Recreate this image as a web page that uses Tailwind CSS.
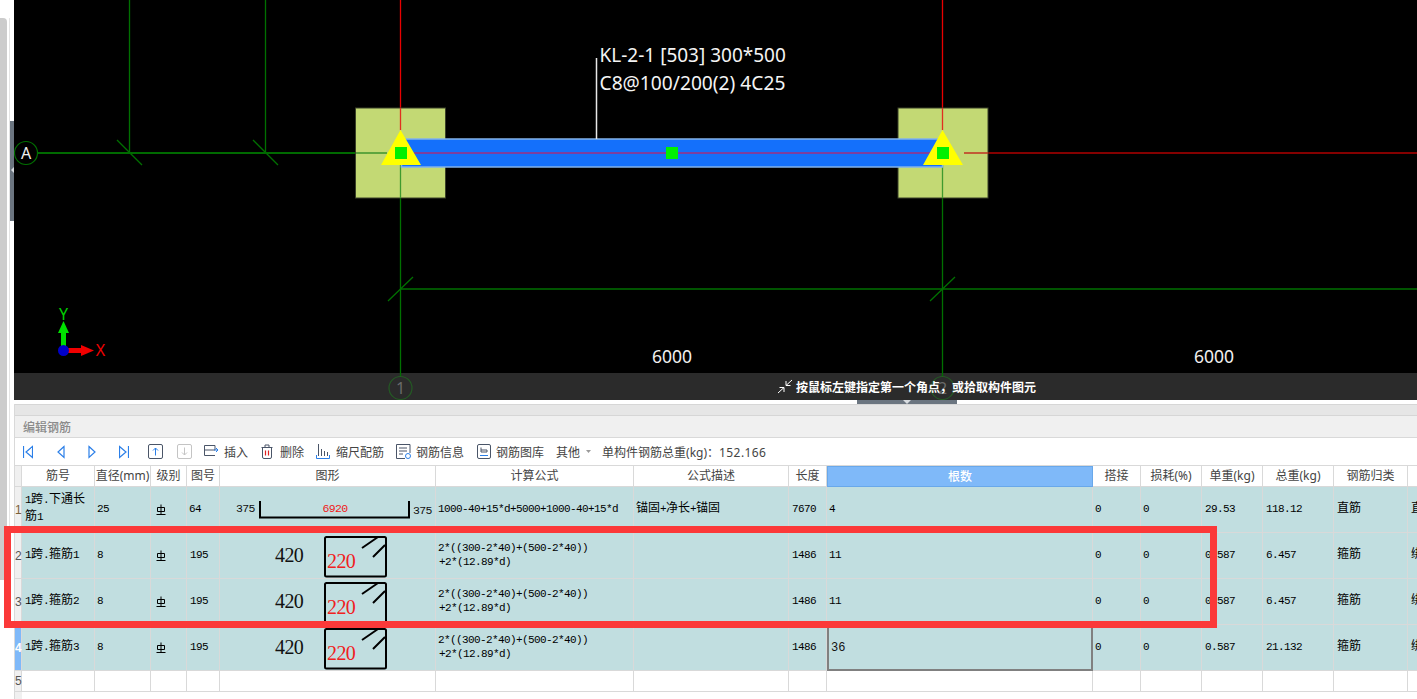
<!DOCTYPE html>
<html lang="zh">
<head>
<meta charset="utf-8">
<title>编辑钢筋</title>
<script src="https://cdn.jsdelivr.net/npm/@tailwindcss/browser@4"></script>
</head>
<body class="w-[1417px] h-[699px] overflow-hidden bg-white relative font-['Noto_Sans','Noto_Sans_CJK_SC',sans-serif]">
<div class="flex h-[699px]">
  <!-- left rail -->
  <div class="w-[14px] shrink-0 flex flex-col">
    <div class="relative h-[562px] mt-[18px] flex">
      <div class="w-[7px] h-full bg-[#cccccc] rounded-tr-[4px]"></div>
      <div class="w-[3px] h-full border-r border-[#e4e4e4]"></div>
      <div class="w-[4px] h-[100px] mt-[103px] bg-[#6b7580] flex items-center">
        <svg width="4" height="8" viewBox="0 0 4 8" class="block"><path d="M4 0v6L1 3z" fill="#d8dce0"/></svg>
      </div>
    </div>
  </div>
  <!-- right column -->
  <div class="w-[1403px] shrink-0 flex flex-col">
    <!-- drawing canvas -->
    <div class="relative h-[400px] shrink-0 flex flex-col bg-black">
      <div class="flex-1"></div>
      <div class="h-[27px] bg-[#2b2b2b] flex items-center pl-[763px] gap-[3px]">
        <svg width="16" height="15" viewBox="0 0 16 15" fill="none" stroke="#fff" stroke-width="1" class="block relative z-10"><path d="M1 14 7 8.500M2.500 8.500H7V13M15 1 9 6.500M13.500 6.500H9V2"/></svg>
        <span class="relative z-10 text-xs font-bold text-white whitespace-nowrap font-['Noto_Sans_CJK_SC',sans-serif]">按鼠标左键指定第一个角点，或拾取构件图元</span>
      </div>
      <svg class="absolute left-0 top-0 block" width="1403" height="400" viewBox="14 0 1403 400" fill="none">
        <!-- grid lines -->
        <g stroke="#007000" stroke-width="1.300">
          <path d="M129.500 0V153M265.500 0V153M400.500 165V376M942.500 165V376"/>
          <path d="M117 140 142 165M253 140 278 165M388 301 413 277M930 301 955 277"/>
          <path d="M400 289H1417"/>
        </g>
        <path d="M38 153H356" stroke="#006a00" stroke-width="1.800"/>
        <path d="M400.500 0V130M942.500 0V130" stroke="#e80000" stroke-width="1.300"/>
        <path d="M988 153H1417" stroke="#b00000" stroke-width="1.500"/>
        <!-- columns -->
        <rect x="355.500" y="108" width="90" height="90" fill="#c3d974" stroke="#3a4028"/>
        <rect x="898" y="108" width="90" height="90" fill="#c3d974" stroke="#3a4028"/>
        <path d="M356 153H387M898 153H930" stroke="#5ea53e" stroke-width="1.800"/>
        <path d="M964 153H988" stroke="#c03020" stroke-width="1.500"/>
        <path d="M400.500 165V198M942.500 165V198" stroke="#3f9a2e" stroke-width="1.300"/>
        <path d="M400.500 108V130M942.500 108V130" stroke="#e03020" stroke-width="1.300"/>
        <!-- beam -->
        <rect x="401.500" y="139" width="541" height="28" fill="#1470fb" stroke="#82b2ea" stroke-width="1.500"/>
        <path d="M414 153H930" stroke="#a02f80" stroke-width="1.500"/>
        <path d="M400.500 130 381 165H421Z M942.500 130 923 165H963Z" fill="#ffff00"/>
        <rect x="395" y="147" width="12" height="12" fill="#00f000"/>
        <rect x="666" y="147" width="12" height="12" fill="#00f000"/>
        <rect x="937" y="147" width="12" height="12" fill="#00f000"/>
        <path d="M596.500 58V139" stroke="#e8e8e8" stroke-width="1.500"/>
        <!-- beam label -->
        <text x="599.500" y="62" fill="#f4f4f4" font-size="19" class="font-['Noto_Sans',sans-serif]">KL-2-1 [503] 300*500</text>
        <text x="599.500" y="90" fill="#f4f4f4" font-size="19.200" class="font-['Noto_Sans',sans-serif]">C8@100/200(2) 4C25</text>
        <text x="652" y="363" fill="#f0f0f0" font-size="17.500" class="font-['Noto_Sans',sans-serif]">6000</text>
        <text x="1194" y="363" fill="#f0f0f0" font-size="17.500" class="font-['Noto_Sans',sans-serif]">6000</text>
        <!-- axis bubbles -->
        <circle cx="26" cy="153" r="11.500" stroke="#007000" stroke-width="1.200" fill="#000"/>
        <text x="26" y="159" fill="#f0f0f0" font-size="16" text-anchor="middle" class="font-['Noto_Sans',sans-serif]">A</text>
        <circle cx="400.500" cy="388" r="11.500" stroke="#245a24" stroke-width="1.200"/>
        <text x="400.500" y="394" fill="#6a6a6a" font-size="16" text-anchor="middle" class="font-['Noto_Sans',sans-serif]">1</text>
        <circle cx="942.500" cy="388" r="11.500" stroke="#245a24" stroke-width="1.200"/>
        <text x="942.500" y="394" fill="#6a6a6a" font-size="16" text-anchor="middle" class="font-['Noto_Sans',sans-serif]">2</text>
        <!-- coordinate axes -->
        <rect x="61" y="331" width="5" height="19" fill="#00e000"/>
        <path d="M63.500 321 69 333H58Z" fill="#00e000"/>
        <rect x="64" y="348" width="20" height="5" fill="#f00000"/>
        <path d="M94 350.500 81 345V356Z" fill="#f00000"/>
        <circle cx="63.500" cy="350.500" r="5.500" fill="#0000c8"/>
        <text x="63.500" y="320" fill="#00d000" font-size="16" text-anchor="middle" class="font-['Noto_Sans',sans-serif]">Y</text>
        <text x="100.500" y="356" fill="#f00000" font-size="16" text-anchor="middle" class="font-['Noto_Sans',sans-serif]">X</text>
      </svg>
    </div>
    <!-- splitter -->
    <div class="h-[4px] shrink-0 bg-white">
      <div class="ml-[843px] w-[100px] h-[4px] bg-[#6b7580] flex justify-center">
        <svg width="8" height="4" viewBox="0 0 8 4" class="block"><path d="M0 0h8L4 4z" fill="#d8dce0"/></svg>
      </div>
    </div>
    <!-- bottom panel -->
    <div class="flex-1 flex flex-col border-l border-[#d9d9d9] overflow-hidden">
      <div class="h-[12px] shrink-0 bg-[#e6e6e6] border-y border-[#d6d6d6]"></div>
      <div class="h-[22px] shrink-0 bg-[#f0f0f0] border-b border-[#d9d9d9] flex items-center pl-[8px]">
        <span class="text-xs font-medium text-[#8a8a8a] font-['Noto_Sans_CJK_SC',sans-serif]">编辑钢筋</span>
      </div>
      <!-- toolbar -->
      <div class="h-[27px] shrink-0 flex items-center text-xs text-[#444] whitespace-nowrap font-['Noto_Sans','Noto_Sans_CJK_SC',sans-serif]">
        <svg class="ml-[8px] block shrink-0" width="10" height="14" viewBox="0 0 10 14" fill="none" stroke="#2b7fe8" stroke-width="1.200"><path d="M.5 1V13M9.500 1.500 3 7l6.500 5.500z"/></svg>
        <svg class="ml-[24px] block shrink-0" width="8" height="14" viewBox="0 0 8 14" fill="none" stroke="#2b7fe8" stroke-width="1.200"><path d="M7 1.500 1 7l6 5.500z"/></svg>
        <svg class="ml-[23px] block shrink-0" width="8" height="14" viewBox="0 0 8 14" fill="none" stroke="#2b7fe8" stroke-width="1.200"><path d="M1 1.500 7 7l-6 5.500z"/></svg>
        <svg class="ml-[23px] block shrink-0" width="10" height="14" viewBox="0 0 10 14" fill="none" stroke="#2b7fe8" stroke-width="1.200"><path d="M9.500 1V13M.5 1.500 7 7 .5 12.500z"/></svg>
        <svg class="ml-[19px] block shrink-0" width="15" height="15" viewBox="0 0 15 15" fill="none"><rect x=".5" y=".5" width="14" height="14" rx="1.500" stroke="#4a5568"/><path d="M7.500 11.500V4M5 6.500 7.500 4 10 6.500" stroke="#2b7fe8"/></svg>
        <svg class="ml-[14px] block shrink-0" width="15" height="15" viewBox="0 0 15 15" fill="none"><rect x=".5" y=".5" width="14" height="14" rx="1.500" stroke="#c4c4c4"/><path d="M7.500 3.500V11M5 8.500 7.500 11 10 8.500" stroke="#c4c4c4"/></svg>
        <svg class="ml-[12px] block shrink-0" width="15" height="13" viewBox="0 0 15 13" fill="none"><path d="M.5 .5H11V5H.5zM.5 5V10.500H11" stroke="#4a5568"/><path d="M10 5H14M12 3l2 2-2 2" stroke="#2b7fe8"/></svg>
        <span class="ml-[5px] pt-[2px]">插入</span>
        <svg class="ml-[13px] block shrink-0" width="12" height="15" viewBox="0 0 12 15" fill="none"><path d="M.5 3.500H11.500M4 3.500V1H8V3.500M1.500 3.500V13A1.500 1.500 0 0 0 3 14.500H9A1.500 1.500 0 0 0 10.500 13V3.500" stroke="#4a5568"/><path d="M4.500 6.500V11.500M7.500 6.500V11.500" stroke="#e02020" stroke-width="1.200"/></svg>
        <span class="ml-[7px] pt-[2px]">删除</span>
        <svg class="ml-[12px] block shrink-0" width="14" height="15" viewBox="0 0 14 15" fill="none"><path d="M2.500 0V12M5.500 5V12M8.500 7V12M11.500 8V12" stroke="#4a5568"/><path d="M.5 11V14.500H13.500V11" stroke="#2b7fe8"/></svg>
        <span class="ml-[6px] pt-[2px]">缩尺配筋</span>
        <svg class="ml-[12px] block shrink-0" width="15" height="15" viewBox="0 0 15 15" fill="none"><path d="M9 14.500H.5V.5H14V9M3 4H11M3 7H11M3 10H7" stroke="#4a5568"/><circle cx="12" cy="12" r="2.500" stroke="#2b7fe8"/></svg>
        <span class="ml-[5px] pt-[2px]">钢筋信息</span>
        <svg class="ml-[13px] block shrink-0" width="14" height="15" viewBox="0 0 14 15" fill="none"><rect x=".5" y=".5" width="13" height="14" rx="1.500" stroke="#4a5568"/><path d="M4 3.500V8H10V6H4" stroke="#4a5568"/><path d="M3 11.500H11" stroke="#2b7fe8"/></svg>
        <span class="ml-[5px] pt-[2px]">钢筋图库</span>
        <span class="ml-[12px] pt-[2px]">其他</span>
        <svg class="ml-[6px] block shrink-0" width="5" height="3" viewBox="0 0 5 3"><path d="M0 0h5L2.500 3z" fill="#9a9a9a"/></svg>
        <span class="ml-[11px] pt-[2px]">单构件钢筋总重(kg)：<span class="tracking-[0.4px]">152.166</span></span>
      </div>
      <!-- steel table -->
      <div class="border-t border-[#d9d9d9] grid grid-cols-[7px_73px_56px_36px_33px_216px_198px_155px_38px_266px_48px_61px_61px_71px_74px_9px] grid-rows-[21px_46px_46px_46px_46px_21px] font-['Liberation_Mono','Noto_Sans_CJK_SC',monospace] text-[11px] leading-[14px] tracking-[-0.6px] text-black whitespace-nowrap">
        <!-- header -->
        <div class="bg-[#f0f0f0] border-r border-b border-[#d9d9d9]"></div>
        <div class="flex items-center justify-center border-r border-b border-[#d9d9d9] bg-white text-xs tracking-normal text-[#444] font-['Noto_Sans','Noto_Sans_CJK_SC',sans-serif]">筋号</div>
        <div class="flex items-center justify-center border-r border-b border-[#d9d9d9] bg-white text-xs tracking-normal text-[#444] font-['Noto_Sans','Noto_Sans_CJK_SC',sans-serif]">直径(mm)</div>
        <div class="flex items-center justify-center border-r border-b border-[#d9d9d9] bg-white text-xs tracking-normal text-[#444] font-['Noto_Sans','Noto_Sans_CJK_SC',sans-serif]">级别</div>
        <div class="flex items-center justify-center border-r border-b border-[#d9d9d9] bg-white text-xs tracking-normal text-[#444] font-['Noto_Sans','Noto_Sans_CJK_SC',sans-serif]">图号</div>
        <div class="flex items-center justify-center border-r border-b border-[#d9d9d9] bg-white text-xs tracking-normal text-[#444] font-['Noto_Sans','Noto_Sans_CJK_SC',sans-serif]">图形</div>
        <div class="flex items-center justify-center border-r border-b border-[#d9d9d9] bg-white text-xs tracking-normal text-[#444] font-['Noto_Sans','Noto_Sans_CJK_SC',sans-serif]">计算公式</div>
        <div class="flex items-center justify-center border-r border-b border-[#d9d9d9] bg-white text-xs tracking-normal text-[#444] font-['Noto_Sans','Noto_Sans_CJK_SC',sans-serif]">公式描述</div>
        <div class="flex items-center justify-center border-r border-b border-[#d9d9d9] bg-white text-xs tracking-normal text-[#444] font-['Noto_Sans','Noto_Sans_CJK_SC',sans-serif]">长度</div>
        <div class="flex items-center justify-center border border-[#69a8ea] bg-[#7fb9f9] text-xs font-medium tracking-normal text-white font-['Noto_Sans','Noto_Sans_CJK_SC',sans-serif]">根数</div>
        <div class="flex items-center justify-center border-r border-b border-[#d9d9d9] bg-white text-xs tracking-normal text-[#444] font-['Noto_Sans','Noto_Sans_CJK_SC',sans-serif]">搭接</div>
        <div class="flex items-center justify-center border-r border-b border-[#d9d9d9] bg-white text-xs tracking-normal text-[#444] font-['Noto_Sans','Noto_Sans_CJK_SC',sans-serif]">损耗(%)</div>
        <div class="flex items-center justify-center border-r border-b border-[#d9d9d9] bg-white text-xs tracking-normal text-[#444] font-['Noto_Sans','Noto_Sans_CJK_SC',sans-serif]">单重(kg)</div>
        <div class="flex items-center justify-center border-r border-b border-[#d9d9d9] bg-white text-xs tracking-normal text-[#444] font-['Noto_Sans','Noto_Sans_CJK_SC',sans-serif]">总重(kg)</div>
        <div class="flex items-center justify-center border-r border-b border-[#d9d9d9] bg-white text-xs tracking-normal text-[#444] font-['Noto_Sans','Noto_Sans_CJK_SC',sans-serif]">钢筋归类</div>
        <div class="border-b border-[#d9d9d9] bg-white"></div>

        <!-- row 1 -->
        <div class="flex items-center border-r border-b border-[#d9d9d9] bg-[#f0f0f0] text-[#7a6038] text-xs tracking-normal font-['Liberation_Sans',sans-serif]">1</div>
        <div class="pl-[3px] pt-[5px] border-r border-b border-[#d9d9d9] bg-[#c1dee0] overflow-hidden leading-[17px]"><div>1<span class="text-xs tracking-normal">跨</span>.<span class="text-xs tracking-normal">下通长</span></div><div><span class="text-xs tracking-normal">筋</span>1</div></div>
        <div class="flex items-center pl-[2px] pb-[2px] border-r border-b border-[#d9d9d9] bg-[#c1dee0]">25</div>
        <div class="flex items-center pl-[5px] border-r border-b border-[#d9d9d9] bg-[#c1dee0]"><svg width="10" height="11" viewBox="0 0 10 11" fill="none" stroke="#000" class="block"><path d="M1.500 3.500H8.500V7.500H1.500zM5 .5V10M.5 10.500H9.500"/></svg></div>
        <div class="flex items-center pl-[2px] pb-[2px] border-r border-b border-[#d9d9d9] bg-[#c1dee0]">64</div>
        <div class="border-r border-b border-[#d9d9d9] bg-[#c1dee0] overflow-hidden"><svg width="215" height="45" viewBox="220 487 215 45" fill="none" class="block"><path d="M260 501V517.500H409V501" stroke="#000" stroke-width="2"/><text x="236" y="512" fill="#111" font-size="11.500" class="font-['Liberation_Mono',monospace]">375</text><text x="335" y="512" fill="#f01818" font-size="11.500" text-anchor="middle" class="font-['Liberation_Mono',monospace]">6920</text><text x="413" y="514" fill="#111" font-size="11.500" class="font-['Liberation_Mono',monospace]">375</text></svg></div>
        <div class="flex items-center pl-[2px] pb-[2px] border-r border-b border-[#d9d9d9] bg-[#c1dee0] overflow-hidden">1000-40+15*d+5000+1000-40+15*d</div>
        <div class="flex items-center pl-[2px] pb-[2px] border-r border-b border-[#d9d9d9] bg-[#c1dee0]"><span class="text-xs tracking-normal">锚固</span>+<span class="text-xs tracking-normal">净长</span>+<span class="text-xs tracking-normal">锚固</span></div>
        <div class="flex items-center pl-[3px] pb-[2px] border-r border-b border-[#d9d9d9] bg-[#c1dee0]">7670</div>
        <div class="flex items-center pl-[2px] pb-[2px] border-r border-b border-[#d9d9d9] bg-[#c1dee0]">4</div>
        <div class="flex items-center pl-[2px] pb-[2px] border-r border-b border-[#d9d9d9] bg-[#c1dee0]">0</div>
        <div class="flex items-center pl-[2px] pb-[2px] border-r border-b border-[#d9d9d9] bg-[#c1dee0]">0</div>
        <div class="flex items-center pl-[3px] pb-[2px] border-r border-b border-[#d9d9d9] bg-[#c1dee0]">29.53</div>
        <div class="flex items-center pl-[3px] pb-[2px] border-r border-b border-[#d9d9d9] bg-[#c1dee0]">118.12</div>
        <div class="flex items-center pl-[3px] pb-[2px] border-r border-b border-[#d9d9d9] bg-[#c1dee0]"><span class="text-xs tracking-normal">直筋</span></div>
        <div class="flex items-center pl-[3px] pb-[2px] border-b border-[#d9d9d9] bg-[#c1dee0] overflow-hidden"><span class="text-xs tracking-normal">直</span></div>

        <!-- row 2 -->
        <div class="flex items-center border-r border-b border-[#d9d9d9] bg-[#f0f0f0] text-[#555] text-xs tracking-normal font-['Liberation_Sans',sans-serif]">2</div>
        <div class="flex items-center pl-[3px] pb-[2px] border-r border-b border-[#d9d9d9] bg-[#c1dee0] overflow-hidden"><span>1<span class="text-xs tracking-normal">跨</span>.<span class="text-xs tracking-normal">箍筋</span>1</span></div>
        <div class="flex items-center pl-[2px] pb-[2px] border-r border-b border-[#d9d9d9] bg-[#c1dee0]">8</div>
        <div class="flex items-center pl-[5px] border-r border-b border-[#d9d9d9] bg-[#c1dee0]"><svg width="10" height="11" viewBox="0 0 10 11" fill="none" stroke="#000" class="block"><path d="M1.500 3.500H8.500V7.500H1.500zM5 .5V10M.5 10.500H9.500"/></svg></div>
        <div class="flex items-center pl-[3px] pb-[2px] border-r border-b border-[#d9d9d9] bg-[#c1dee0]">195</div>
        <div class="border-r border-b border-[#d9d9d9] bg-[#c1dee0] overflow-hidden"><svg width="215" height="45" viewBox="220 533 215 45" fill="none" class="block"><text x="275" y="562" fill="#111" font-size="20" class="font-['Liberation_Serif',serif]">420</text><rect x="325" y="537" width="61" height="39.500" rx="1.500" stroke="#000" stroke-width="2"/><path d="M362 548 378 537M373 557 385 545" stroke="#000" stroke-width="2"/><text x="327" y="568" fill="#f02020" font-size="20" class="font-['Liberation_Serif',serif]">220</text></svg></div>
        <div class="flex flex-col justify-center pl-[2px] pb-[2px] border-r border-b border-[#d9d9d9] bg-[#c1dee0] overflow-hidden"><div>2*((300-2*40)+(500-2*40))</div><div class="pl-[1px]">+2*(12.89*d)</div></div>
        <div class="border-r border-b border-[#d9d9d9] bg-[#c1dee0]"></div>
        <div class="flex items-center pl-[3px] pb-[2px] border-r border-b border-[#d9d9d9] bg-[#c1dee0]">1486</div>
        <div class="flex items-center pl-[2px] pb-[2px] border-r border-b border-[#d9d9d9] bg-[#c1dee0]">11</div>
        <div class="flex items-center pl-[2px] pb-[2px] border-r border-b border-[#d9d9d9] bg-[#c1dee0]">0</div>
        <div class="flex items-center pl-[2px] pb-[2px] border-r border-b border-[#d9d9d9] bg-[#c1dee0]">0</div>
        <div class="flex items-center pl-[3px] pb-[2px] border-r border-b border-[#d9d9d9] bg-[#c1dee0]">0.587</div>
        <div class="flex items-center pl-[3px] pb-[2px] border-r border-b border-[#d9d9d9] bg-[#c1dee0]">6.457</div>
        <div class="flex items-center pl-[3px] pb-[2px] border-r border-b border-[#d9d9d9] bg-[#c1dee0]"><span class="text-xs tracking-normal">箍筋</span></div>
        <div class="flex items-center pl-[3px] pb-[2px] border-b border-[#d9d9d9] bg-[#c1dee0] overflow-hidden"><span class="text-xs tracking-normal">绑</span></div>

        <!-- row 3 -->
        <div class="flex items-center border-r border-b border-[#d9d9d9] bg-[#f0f0f0] text-[#555] text-xs tracking-normal font-['Liberation_Sans',sans-serif]">3</div>
        <div class="flex items-center pl-[3px] pb-[2px] border-r border-b border-[#d9d9d9] bg-[#c1dee0] overflow-hidden"><span>1<span class="text-xs tracking-normal">跨</span>.<span class="text-xs tracking-normal">箍筋</span>2</span></div>
        <div class="flex items-center pl-[2px] pb-[2px] border-r border-b border-[#d9d9d9] bg-[#c1dee0]">8</div>
        <div class="flex items-center pl-[5px] border-r border-b border-[#d9d9d9] bg-[#c1dee0]"><svg width="10" height="11" viewBox="0 0 10 11" fill="none" stroke="#000" class="block"><path d="M1.500 3.500H8.500V7.500H1.500zM5 .5V10M.5 10.500H9.500"/></svg></div>
        <div class="flex items-center pl-[3px] pb-[2px] border-r border-b border-[#d9d9d9] bg-[#c1dee0]">195</div>
        <div class="border-r border-b border-[#d9d9d9] bg-[#c1dee0] overflow-hidden"><svg width="215" height="45" viewBox="220 533 215 45" fill="none" class="block"><text x="275" y="562" fill="#111" font-size="20" class="font-['Liberation_Serif',serif]">420</text><rect x="325" y="537" width="61" height="39.500" rx="1.500" stroke="#000" stroke-width="2"/><path d="M362 548 378 537M373 557 385 545" stroke="#000" stroke-width="2"/><text x="327" y="568" fill="#f02020" font-size="20" class="font-['Liberation_Serif',serif]">220</text></svg></div>
        <div class="flex flex-col justify-center pl-[2px] pb-[2px] border-r border-b border-[#d9d9d9] bg-[#c1dee0] overflow-hidden"><div>2*((300-2*40)+(500-2*40))</div><div class="pl-[1px]">+2*(12.89*d)</div></div>
        <div class="border-r border-b border-[#d9d9d9] bg-[#c1dee0]"></div>
        <div class="flex items-center pl-[3px] pb-[2px] border-r border-b border-[#d9d9d9] bg-[#c1dee0]">1486</div>
        <div class="flex items-center pl-[2px] pb-[2px] border-r border-b border-[#d9d9d9] bg-[#c1dee0]">11</div>
        <div class="flex items-center pl-[2px] pb-[2px] border-r border-b border-[#d9d9d9] bg-[#c1dee0]">0</div>
        <div class="flex items-center pl-[2px] pb-[2px] border-r border-b border-[#d9d9d9] bg-[#c1dee0]">0</div>
        <div class="flex items-center pl-[3px] pb-[2px] border-r border-b border-[#d9d9d9] bg-[#c1dee0]">0.587</div>
        <div class="flex items-center pl-[3px] pb-[2px] border-r border-b border-[#d9d9d9] bg-[#c1dee0]">6.457</div>
        <div class="flex items-center pl-[3px] pb-[2px] border-r border-b border-[#d9d9d9] bg-[#c1dee0]"><span class="text-xs tracking-normal">箍筋</span></div>
        <div class="flex items-center pl-[3px] pb-[2px] border-b border-[#d9d9d9] bg-[#c1dee0] overflow-hidden"><span class="text-xs tracking-normal">绑</span></div>

        <!-- row 4 -->
        <div class="flex items-center border-r border-b border-[#d9d9d9] bg-[#7fb9f9] text-white text-xs font-bold tracking-normal font-['Liberation_Sans',sans-serif]">4</div>
        <div class="flex items-center pl-[3px] pb-[2px] border-r border-b border-[#d9d9d9] bg-[#c1dee0] overflow-hidden"><span>1<span class="text-xs tracking-normal">跨</span>.<span class="text-xs tracking-normal">箍筋</span>3</span></div>
        <div class="flex items-center pl-[2px] pb-[2px] border-r border-b border-[#d9d9d9] bg-[#c1dee0]">8</div>
        <div class="flex items-center pl-[5px] border-r border-b border-[#d9d9d9] bg-[#c1dee0]"><svg width="10" height="11" viewBox="0 0 10 11" fill="none" stroke="#000" class="block"><path d="M1.500 3.500H8.500V7.500H1.500zM5 .5V10M.5 10.500H9.500"/></svg></div>
        <div class="flex items-center pl-[3px] pb-[2px] border-r border-b border-[#d9d9d9] bg-[#c1dee0]">195</div>
        <div class="border-r border-b border-[#d9d9d9] bg-[#c1dee0] overflow-hidden"><svg width="215" height="45" viewBox="220 533 215 45" fill="none" class="block"><text x="275" y="562" fill="#111" font-size="20" class="font-['Liberation_Serif',serif]">420</text><rect x="325" y="537" width="61" height="39.500" rx="1.500" stroke="#000" stroke-width="2"/><path d="M362 548 378 537M373 557 385 545" stroke="#000" stroke-width="2"/><text x="327" y="568" fill="#f02020" font-size="20" class="font-['Liberation_Serif',serif]">220</text></svg></div>
        <div class="flex flex-col justify-center pl-[2px] pb-[2px] border-r border-b border-[#d9d9d9] bg-[#c1dee0] overflow-hidden"><div>2*((300-2*40)+(500-2*40))</div><div class="pl-[1px]">+2*(12.89*d)</div></div>
        <div class="border-r border-b border-[#d9d9d9] bg-[#c1dee0]"></div>
        <div class="flex items-center pl-[3px] pb-[2px] border-r border-b border-[#d9d9d9] bg-[#c1dee0]">1486</div>
        <div class="flex items-center pl-[2px] border-2 border-[#808080] bg-[#c1dee0] text-xs tracking-normal text-[#111]">36</div>
        <div class="flex items-center pl-[2px] pb-[2px] border-r border-b border-[#d9d9d9] bg-[#c1dee0]">0</div>
        <div class="flex items-center pl-[2px] pb-[2px] border-r border-b border-[#d9d9d9] bg-[#c1dee0]">0</div>
        <div class="flex items-center pl-[3px] pb-[2px] border-r border-b border-[#d9d9d9] bg-[#c1dee0]">0.587</div>
        <div class="flex items-center pl-[3px] pb-[2px] border-r border-b border-[#d9d9d9] bg-[#c1dee0]">21.132</div>
        <div class="flex items-center pl-[3px] pb-[2px] border-r border-b border-[#d9d9d9] bg-[#c1dee0]"><span class="text-xs tracking-normal">箍筋</span></div>
        <div class="flex items-center pl-[3px] pb-[2px] border-b border-[#d9d9d9] bg-[#c1dee0] overflow-hidden"><span class="text-xs tracking-normal">绑</span></div>

        <!-- row 5 -->
        <div class="flex items-center border-r border-b border-[#d9d9d9] bg-[#f0f0f0] text-[#555] text-xs tracking-normal font-['Liberation_Sans',sans-serif]">5</div>
        <div class="border-r border-b border-[#d9d9d9]"></div>
        <div class="border-r border-b border-[#d9d9d9]"></div>
        <div class="border-r border-b border-[#d9d9d9]"></div>
        <div class="border-r border-b border-[#d9d9d9]"></div>
        <div class="border-r border-b border-[#d9d9d9]"></div>
        <div class="border-r border-b border-[#d9d9d9]"></div>
        <div class="border-r border-b border-[#d9d9d9]"></div>
        <div class="border-r border-b border-[#d9d9d9]"></div>
        <div class="border-r border-b border-[#d9d9d9]"></div>
        <div class="border-r border-b border-[#d9d9d9]"></div>
        <div class="border-r border-b border-[#d9d9d9]"></div>
        <div class="border-r border-b border-[#d9d9d9]"></div>
        <div class="border-r border-b border-[#d9d9d9]"></div>
        <div class="border-r border-b border-[#d9d9d9]"></div>
        <div class="border-b border-[#d9d9d9]"></div>
      </div>
      <div class="flex-1 w-[7px] bg-[#f0f0f0]"></div>
    </div>
  </div>
</div>
<!-- red annotation box over the table -->
<div class="absolute left-[4px] top-[526px] w-[1213px] h-[102px] border-[7px] border-[#fb3939] pointer-events-none"></div>
</body>
</html>
